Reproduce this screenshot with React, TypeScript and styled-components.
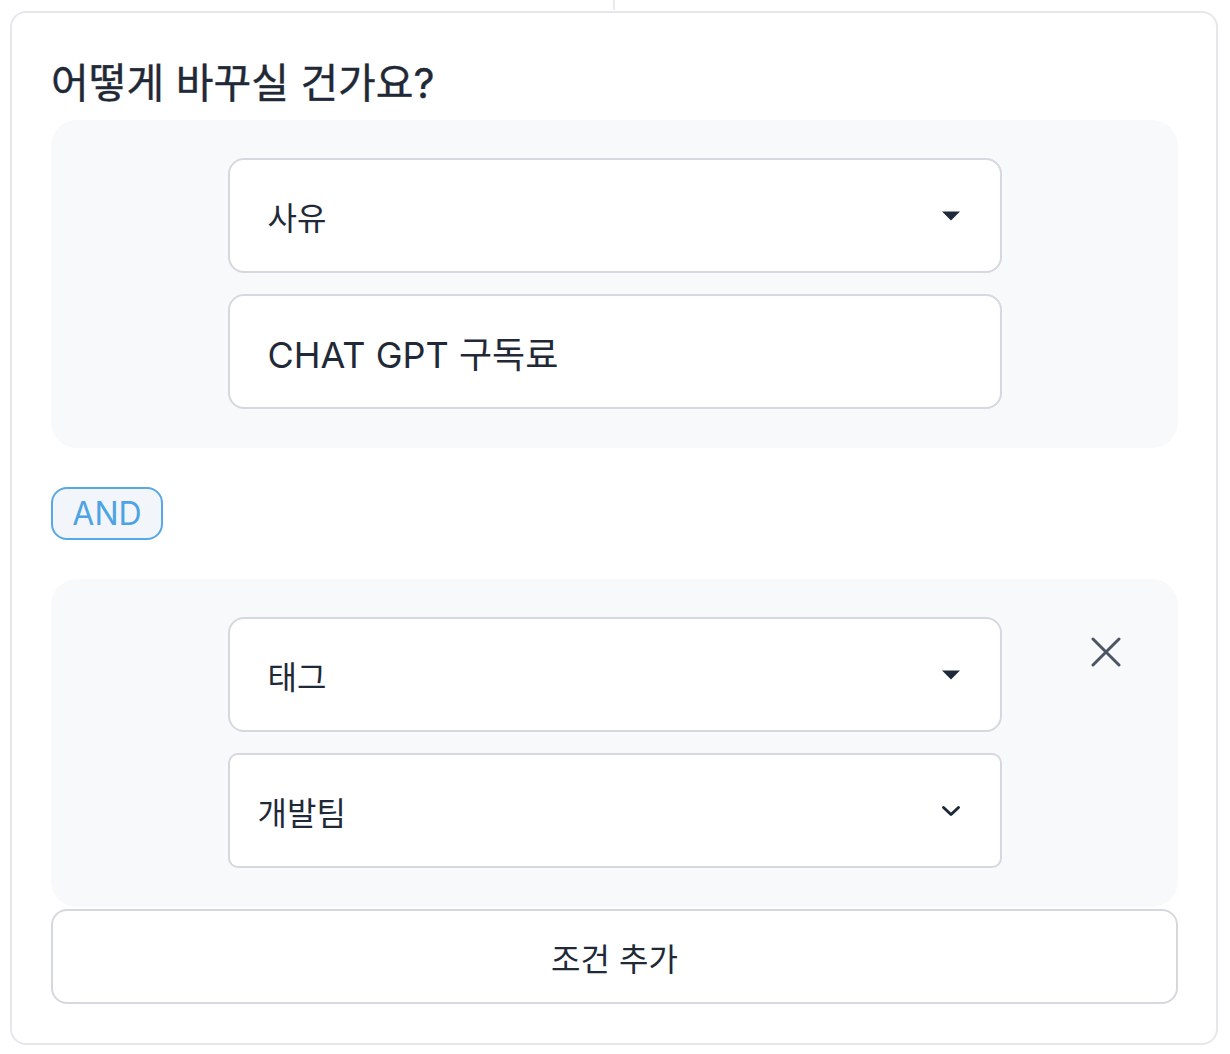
import * as React from "react";
import styled, { createGlobalStyle } from "styled-components";

const GlobalStyle = createGlobalStyle`
  html, body {
    margin: 0;
    padding: 0;
    background: #ffffff;
  }
  body {
    font-family: Inter, "Noto Sans CJK KR", sans-serif;
    color: #1f2937;
  }
`;

const Page = styled.div`
  width: 1230px;
  display: flex;
  flex-direction: column;
`;

const TopStrip = styled.div`
  height: 11px;
  display: flex;
  justify-content: center;
`;

const Divider = styled.div`
  width: 2px;
  height: 10px;
  margin-left: -2px;
  background: #e8eaee;
`;

const Card = styled.section`
  box-sizing: border-box;
  width: 1208px;
  margin-left: 10px;
  border: 2px solid #e5e7eb;
  border-radius: 16px;
  padding: 46px 38px 39px 39px;
  display: flex;
  flex-direction: column;
`;

const Title = styled.h2`
  margin: 0 0 12px;
  font-size: 41px;
  line-height: 49px;
  font-weight: 400;
  color: #1f2937;
  -webkit-text-stroke: 0.4px #1f2937;
`;

const Panel = styled.div`
  position: relative;
  background: #f8f9fb;
  border-radius: 26px;
  padding: 38px 0 39px;
  display: flex;
  flex-direction: column;
  align-items: center;
  gap: 21px;
`;

const Field = styled.div<{ $radius?: number; $inset?: number; $size?: number }>`
  box-sizing: border-box;
  width: 774px;
  height: 115px;
  background: #ffffff;
  border: 2px solid #d5d8de;
  border-radius: ${(p) => p.$radius ?? 16}px;
  padding: 0 39px 0 ${(p) => p.$inset ?? 38}px;
  display: flex;
  align-items: center;
  justify-content: space-between;
  font-size: ${(p) => p.$size ?? 32}px;
  color: #1f2937;
`;

const Connector = styled.div`
  box-sizing: border-box;
  align-self: flex-start;
  width: 112px;
  height: 53px;
  margin: 39px 0;
  border: 2px solid #56a8e6;
  border-radius: 16px;
  background: #f2f6fa;
  color: #4ea3e4;
  font-size: 32px;
  display: flex;
  align-items: center;
  justify-content: center;
`;

const RemoveButton = styled.button`
  position: absolute;
  top: 53px;
  right: 52px;
  width: 40px;
  height: 40px;
  padding: 0;
  border: none;
  background: transparent;
  display: flex;
  align-items: center;
  justify-content: center;
  cursor: pointer;
`;

const AddButton = styled.button`
  box-sizing: border-box;
  margin-top: 2px;
  height: 95px;
  width: 100%;
  background: #ffffff;
  border: 2px solid #d5d8de;
  border-radius: 16px;
  font-family: inherit;
  font-size: 32px;
  color: #1f2937;
  cursor: pointer;
`;

const Caret = () => (
  <svg width="20" height="10" viewBox="0 0 20 10">
    <path d="M1 0.5 H19 L10 9.5 Z" fill="#1f2937" />
  </svg>
);

const Chevron = () => (
  <svg width="20" height="14" viewBox="0 0 20 14">
    <path d="M2.5 3.5 L10 10.5 L17.5 3.5" fill="none" stroke="#1f2937" strokeWidth="3" strokeLinecap="round" strokeLinejoin="round" />
  </svg>
);

const CloseIcon = () => (
  <svg width="30" height="30" viewBox="0 0 30 30">
    <path d="M2 2 L28 28 M28 2 L2 28" stroke="#4b5563" strokeWidth="3" strokeLinecap="round" />
  </svg>
);

export default function App() {
  return (
    <Page>
      <GlobalStyle />
      <TopStrip>
        <Divider />
      </TopStrip>
      <Card>
        <Title>어떻게 바꾸실 건가요?</Title>
        <Panel>
          <Field>
            <span>사유</span>
            <Caret />
          </Field>
          <Field $size={36}>
            <span>CHAT GPT 구독료</span>
          </Field>
        </Panel>
        <Connector>AND</Connector>
        <Panel>
          <RemoveButton aria-label="조건 삭제">
            <CloseIcon />
          </RemoveButton>
          <Field>
            <span>태그</span>
            <Caret />
          </Field>
          <Field $radius={10} $inset={28}>
            <span>개발팀</span>
            <Chevron />
          </Field>
        </Panel>
        <AddButton>조건 추가</AddButton>
      </Card>
    </Page>
  );
}
